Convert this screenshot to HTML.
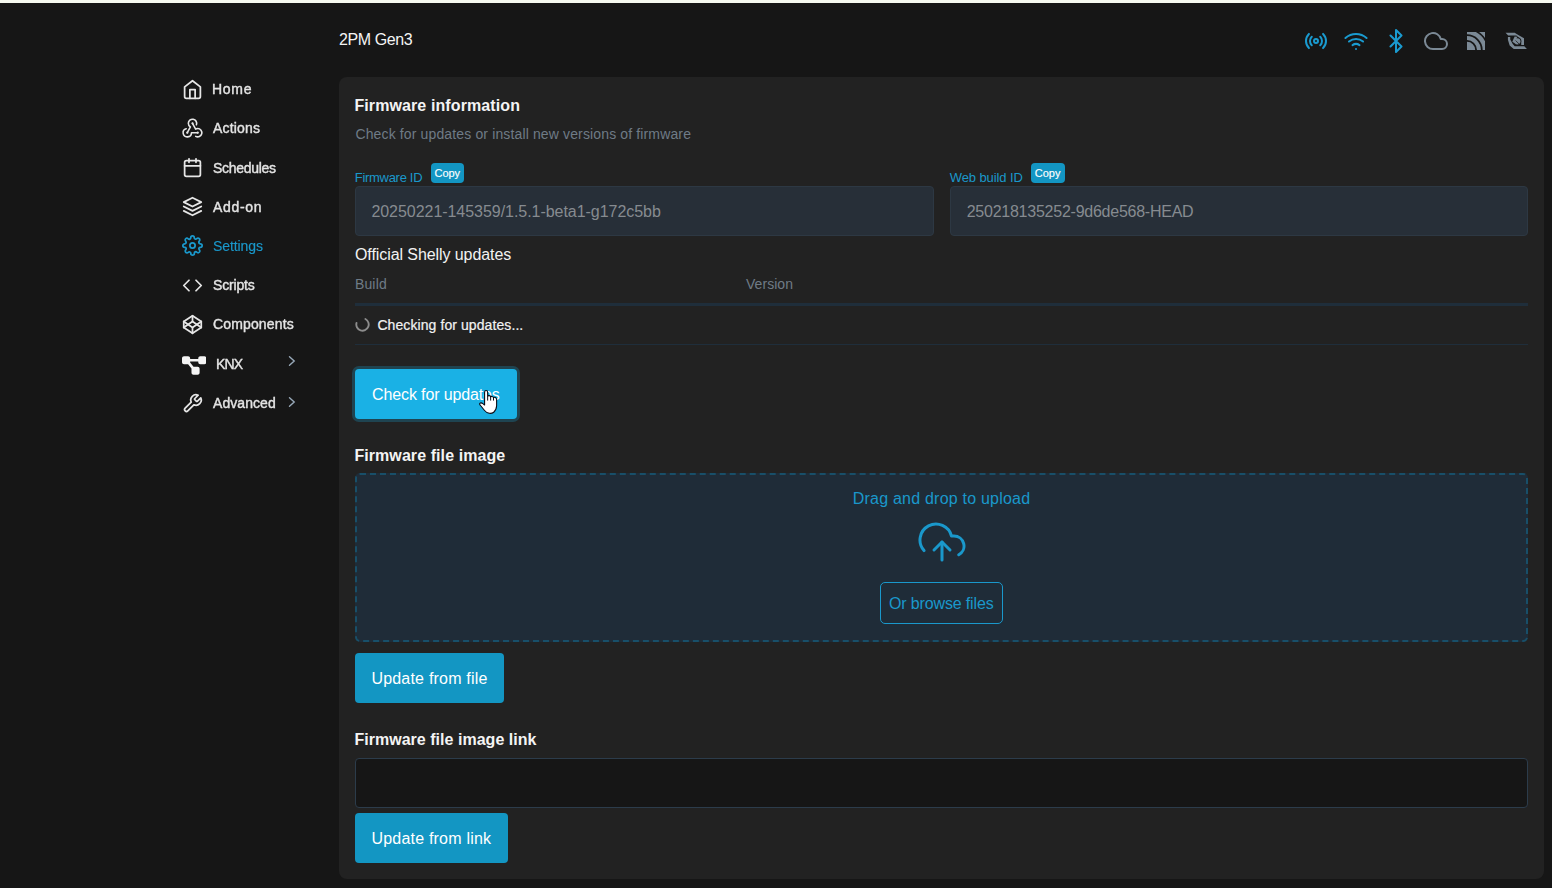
<!DOCTYPE html>
<html lang="en">
<head>
<meta charset="utf-8">
<title>2PM Gen3</title>
<style>
*{box-sizing:border-box;margin:0;padding:0}
html,body{width:1552px;height:888px;overflow:hidden;background:#161616}
body{font-family:"Liberation Sans",sans-serif;color:#e9e9e9;position:relative;font-size:16px}
.abs,.t{position:absolute;white-space:nowrap;line-height:1}
.t{z-index:3}
#topstrip{left:0;top:0;width:1552px;height:3px;background:#f6f9f0}
#card{left:339px;top:77px;width:1205px;height:802px;background:#222222;border-radius:8px}
.ico{position:absolute;width:21px;height:21px;fill:none;stroke:#e6e6e6;stroke-width:2;stroke-linecap:round;stroke-linejoin:round}
.ico.active{stroke:#1a98cb}
.chev{position:absolute;left:285px;width:14px;height:14px;fill:none;stroke:#98a9b9;stroke-width:1.4;stroke-linecap:round;stroke-linejoin:miter}
.field{background:#272f38;border:1px solid #2d3843;border-radius:4px;height:50px}
.btn{background:#1396c3;border-radius:4px}
.st{position:absolute;top:29px;width:24px;height:24px;fill:none;stroke:#1a9bd0;stroke-width:2;stroke-linecap:round;stroke-linejoin:round}
</style>
</head>
<body>
<div id="topstrip" class="abs"></div>

<!-- sidebar icons -->
<svg class="ico" style="left:181.9px;top:79px" viewBox="0 0 24 24"><path d="M3 9l9-7 9 7v11a2 2 0 0 1-2 2H5a2 2 0 0 1-2-2z"/><polyline points="9 22 9 12 15 12 15 22"/></svg>
<svg class="ico" style="left:179.900px;top:115.200px;width:25px;height:25px;stroke-width:1.500" viewBox="0 0 24 24"><path d="M5.965 13.136A4 4 0 1 0 11 17h6"/><path d="M15.066 20.502a4 4 0 1 0 1.934-7.502c-.706 0-1.424.179-2 .5l-3-5.500"/><path d="M15.760 9.370A4 4 0 1 0 8 8c0 1.506.77 2.818 2 3.500l-3 5.500"/><g fill="#e6e6e6" stroke="none"><circle cx="12" cy="8" r="1.050"/><circle cx="7" cy="17" r="1.050"/><circle cx="17" cy="17" r="1.050"/></g></svg>
<svg class="ico" style="left:181.9px;top:157px" viewBox="0 0 24 24"><rect x="3" y="4" width="18" height="18" rx="2" ry="2"/><line x1="16" y1="2" x2="16" y2="6"/><line x1="8" y1="2" x2="8" y2="6"/><line x1="3" y1="10" x2="21" y2="10"/></svg>
<svg class="ico" style="left:181.9px;top:195.900px" viewBox="0 0 24 24"><polygon points="12 2 2 7 12 12 22 7 12 2"/><polyline points="2 17 12 22 22 17"/><polyline points="2 12 12 17 22 12"/></svg>
<svg class="ico active" style="left:182px;top:234.900px" viewBox="0 0 24 24"><circle cx="12" cy="12" r="3"/><path d="M19.400 15a1.650 1.650 0 0 0 .33 1.820l.06.06a2 2 0 0 1 0 2.830 2 2 0 0 1-2.830 0l-.06-.06a1.650 1.650 0 0 0-1.820-.33 1.650 1.650 0 0 0-1 1.510V21a2 2 0 0 1-2 2 2 2 0 0 1-2-2v-.09A1.650 1.650 0 0 0 9 19.400a1.650 1.650 0 0 0-1.820.33l-.06.06a2 2 0 0 1-2.830 0 2 2 0 0 1 0-2.830l.06-.06a1.650 1.650 0 0 0 .33-1.820 1.650 1.650 0 0 0-1.510-1H3a2 2 0 0 1-2-2 2 2 0 0 1 2-2h.09A1.650 1.650 0 0 0 4.600 9a1.650 1.650 0 0 0-.33-1.820l-.06-.06a2 2 0 0 1 0-2.830 2 2 0 0 1 2.830 0l.06.06a1.650 1.650 0 0 0 1.820.33H9a1.650 1.650 0 0 0 1-1.510V3a2 2 0 0 1 2-2 2 2 0 0 1 2 2v.09a1.650 1.650 0 0 0 1 1.510 1.650 1.650 0 0 0 1.820-.33l.06-.06a2 2 0 0 1 2.830 0 2 2 0 0 1 0 2.830l-.06.06a1.650 1.650 0 0 0-.33 1.820V9a1.650 1.650 0 0 0 1.510 1H21a2 2 0 0 1 2 2 2 2 0 0 1-2 2h-.09a1.650 1.650 0 0 0-1.510 1z"/></svg>
<svg class="ico" style="left:182px;top:275px" viewBox="0 0 24 24"><polyline points="16 18 22 12 16 6"/><polyline points="8 6 2 12 8 18"/></svg>
<svg class="ico" style="left:181.9px;top:313.900px" viewBox="0 0 24 24"><polygon points="12 2 22 8.500 22 15.500 12 22 2 15.500 2 8.500 12 2"/><line x1="12" y1="22" x2="12" y2="15.500"/><polyline points="22 8.500 12 15.500 2 8.500"/><polyline points="2 15.500 12 8.500 22 15.500"/><line x1="12" y1="2" x2="12" y2="8.500"/></svg>
<svg class="abs" id="knx" style="left:181.700px;top:354.500px;width:24.400px;height:21px" viewBox="0 0 576 512" preserveAspectRatio="none"><path fill="#f4f4f4" d="M0 80C0 53.500 21.500 32 48 32h96c26.500 0 48 21.500 48 48V96H384V80c0-26.500 21.500-48 48-48h96c26.500 0 48 21.500 48 48v96c0 26.500-21.500 48-48 48H432c-26.500 0-48-21.500-48-48V160H192v16c0 1.700-.1 3.400-.3 5L272 288h96c26.500 0 48 21.500 48 48v96c0 26.500-21.500 48-48 48H272c-26.500 0-48-21.500-48-48V336c0-1.700 .1-3.400 .3-5L144 224H48c-26.500 0-48-21.500-48-48V80z"/></svg>
<svg class="ico" style="left:182.300px;top:393.200px" viewBox="0 0 24 24"><path d="M14.700 6.300a1 1 0 0 0 0 1.400l1.600 1.600a1 1 0 0 0 1.400 0l3.770-3.770a6 6 0 0 1-7.940 7.940l-6.910 6.910a2.120 2.120 0 0 1-3-3l6.910-6.910a6 6 0 0 1 7.940-7.940l-3.760 3.760z"/></svg>
<svg class="chev" style="top:354px" viewBox="0 0 14 14"><polyline points="4.500 2.800 9.200 7.050 4.500 11.300"/></svg>
<svg class="chev" style="top:394.900px" viewBox="0 0 14 14"><polyline points="4.500 2.800 9.200 7.050 4.500 11.300"/></svg>

<!-- card -->
<div id="card" class="abs"></div>
<div class="abs btn" style="left:431px;top:163px;width:33px;height:20px"></div>
<div class="abs field" style="left:355px;top:186px;width:579px"></div>
<div class="abs btn" style="left:1031px;top:163px;width:34px;height:20px"></div>
<div class="abs field" style="left:950px;top:186px;width:578px"></div>

<div class="abs" style="left:355px;top:303px;width:1173px;height:3px;background:#1f2e3b"></div>
<svg class="abs" style="left:354.500px;top:317.300px;width:15px;height:15px" viewBox="0 0 15 15"><path d="M10.410 2.030A6.200 6.200 0 1 1 1.490 6" fill="none" stroke="#8c8c8c" stroke-width="1.900" stroke-linecap="round"/></svg>
<div class="abs" style="left:355px;top:344px;width:1173px;height:1px;background:#1f2e3b"></div>

<div class="abs btn" style="left:355px;top:369px;width:162px;height:50px;background:#1ab1e5;box-shadow:0 0 0 3px #1f4451"></div>
<svg class="abs" id="cursor" style="left:466px;top:380px;width:44px;height:44px;z-index:5" viewBox="0 0 888 888"><path d="M375 250Q375 212 405 212Q437 212 437 250L437 330Q440 312 470 315Q497 318 497 345Q500 328 527 332Q555 336 555 362Q560 345 587 350Q618 356 618 395L618 520Q612 610 560 650Q520 680 470 672Q410 660 370 610L285 505Q262 478 290 465Q312 455 340 478L375 505Z" fill="#fff" stroke="#0a0a14" stroke-width="22" stroke-linejoin="round"/><path d="M437 330V415M497 345V415M555 362V415" stroke="#0a0a14" stroke-width="20" fill="none"/></svg>

<div class="abs" style="left:355px;top:473px;width:1173px;height:169px;background:#1f2c38;border:2px dashed #184f69;border-radius:5px"></div>
<svg class="abs" style="left:918px;top:518px;width:48px;height:48px;fill:none;stroke:#1a98cb;stroke-width:1.500;stroke-linecap:round;stroke-linejoin:round" viewBox="0 0 24 24"><polyline points="16 16 12 12 8 16"/><line x1="12" y1="12" x2="12" y2="21"/><path d="M20.390 18.390A5 5 0 0 0 18 9h-1.260A8 8 0 1 0 3 16.300"/></svg>
<div class="abs" style="left:880px;top:582px;width:123px;height:42px;border:1px solid #1a98cb;border-radius:5px"></div>

<div class="abs btn" style="left:355px;top:653px;width:149px;height:50px"></div>
<div class="abs" style="left:355px;top:758px;width:1173px;height:50px;background:#161616;border:1px solid #2c3c4b;border-radius:4px"></div>
<div class="abs btn" style="left:355px;top:813px;width:153px;height:50px"></div>

<div class="t" id="title" style="left:339.00px;top:32px;font-size:16px;color:#f4f4f4;letter-spacing:-0.414px">2PM Gen3</div>
<div class="t" id="n1" style="left:212.10px;top:82px;font-size:14px;color:#e4e4e4;letter-spacing:0.700px;will-change:transform;-webkit-text-stroke:0.4px #e4e4e4">Home</div>
<div class="t" id="n2" style="left:212.70px;top:121px;font-size:14px;color:#e4e4e4;letter-spacing:0.183px;will-change:transform;-webkit-text-stroke:0.4px #e4e4e4">Actions</div>
<div class="t" id="n3" style="left:212.80px;top:161px;font-size:14px;color:#e4e4e4;letter-spacing:-0.300px;will-change:transform;-webkit-text-stroke:0.4px #e4e4e4">Schedules</div>
<div class="t" id="n4" style="left:212.80px;top:200px;font-size:14px;color:#e4e4e4;letter-spacing:0.680px;will-change:transform;-webkit-text-stroke:0.4px #e4e4e4">Add-on</div>
<div class="t" id="n5" style="left:213.00px;top:239px;font-size:14px;color:#1a98cb;letter-spacing:-0.086px;will-change:transform;-webkit-text-stroke:0.15px #1a98cb">Settings</div>
<div class="t" id="n6" style="left:213.00px;top:278px;font-size:14px;color:#e4e4e4;letter-spacing:-0.183px;will-change:transform;-webkit-text-stroke:0.4px #e4e4e4">Scripts</div>
<div class="t" id="n7" style="left:212.80px;top:317px;font-size:14px;color:#e4e4e4;letter-spacing:0.144px;will-change:transform;-webkit-text-stroke:0.4px #e4e4e4">Components</div>
<div class="t" id="n8" style="left:216.20px;top:357px;font-size:14px;color:#e4e4e4;letter-spacing:-0.900px;will-change:transform;-webkit-text-stroke:0.4px #e4e4e4">KNX</div>
<div class="t" id="n9" style="left:212.50px;top:396px;font-size:14px;color:#e4e4e4;letter-spacing:0.071px;will-change:transform;-webkit-text-stroke:0.4px #e4e4e4">Advanced</div>
<div class="t" id="h1" style="left:354.40px;top:98px;font-size:16px;color:#f4f4f4;letter-spacing:0.105px;font-weight:bold">Firmware information</div>
<div class="t" id="sub" style="left:355.40px;top:127px;font-size:14px;color:#6f7b86;letter-spacing:0.138px">Check for updates or install new versions of firmware</div>
<div class="t" id="l1" style="left:354.80px;top:171px;font-size:13px;color:#1a98cb;letter-spacing:-0.300px">Firmware ID</div>
<div class="t" id="l2" style="left:949.70px;top:171px;font-size:13px;color:#1a98cb;letter-spacing:-0.091px">Web build ID</div>
<div class="t" id="c1" style="left:434.60px;top:168px;font-size:11px;color:#ffffff;letter-spacing:-0.067px;-webkit-text-stroke:0.15px #ffffff">Copy</div>
<div class="t" id="c2" style="left:1034.70px;top:168px;font-size:11px;color:#ffffff;letter-spacing:0.033px;-webkit-text-stroke:0.15px #ffffff">Copy</div>
<div class="t" id="i1" style="left:371.40px;top:204px;font-size:16px;color:#868b90;letter-spacing:-0.043px">20250221-145359/1.5.1-beta1-g172c5bb</div>
<div class="t" id="i2" style="left:966.70px;top:204px;font-size:16px;color:#868b90;letter-spacing:-0.244px">250218135252-9d6de568-HEAD</div>
<div class="t" id="osu" style="left:355.00px;top:247px;font-size:16px;color:#f2f2f2;letter-spacing:-0.082px">Official Shelly updates</div>
<div class="t" id="th1" style="left:354.90px;top:277px;font-size:14px;color:#6f7b86;letter-spacing:0.175px">Build</div>
<div class="t" id="th2" style="left:746.00px;top:277px;font-size:14px;color:#6f7b86;letter-spacing:0.050px">Version</div>
<div class="t" id="chk" style="left:377.40px;top:318px;font-size:14px;color:#f2f2f2;letter-spacing:0.086px;-webkit-text-stroke:0.2px #f2f2f2">Checking for updates...</div>
<div class="t" id="b1" style="left:372.10px;top:387px;font-size:16px;color:#ffffff;letter-spacing:-0.131px">Check for updates</div>
<div class="t" id="h2" style="left:354.40px;top:448px;font-size:16px;color:#f4f4f4;letter-spacing:0.078px;font-weight:bold">Firmware file image</div>
<div class="t" id="dd" style="left:852.80px;top:491px;font-size:16px;color:#1a98cb;letter-spacing:0.214px">Drag and drop to upload</div>
<div class="t" id="br" style="left:889.00px;top:596px;font-size:16px;color:#1a98cb;letter-spacing:-0.143px">Or browse files</div>
<div class="t" id="b2" style="left:371.40px;top:671px;font-size:16px;color:#ffffff;letter-spacing:0.207px">Update from file</div>
<div class="t" id="h3" style="left:354.40px;top:732px;font-size:16px;color:#f4f4f4;letter-spacing:0.030px;font-weight:bold">Firmware file image link</div>
<div class="t" id="b3" style="left:371.40px;top:831px;font-size:16px;color:#ffffff;letter-spacing:0.213px">Update from link</div>

<!-- status icons -->
<svg class="st" style="left:1304px" viewBox="0 0 24 24"><circle cx="12" cy="12" r="2"/><path d="M16.240 7.760a6 6 0 0 1 0 8.490m-8.480-.01a6 6 0 0 1 0-8.490m11.310-2.820a10 10 0 0 1 0 14.140m-14.140 0a10 10 0 0 1 0-14.140"/></svg>
<svg class="st" style="left:1344px" viewBox="0 0 24 24"><path d="M5 12.550a11 11 0 0 1 14.080 0"/><path d="M1.420 9a16 16 0 0 1 21.160 0"/><path d="M8.530 16.110a6 6 0 0 1 6.950 0"/><line x1="12" y1="20" x2="12.010" y2="20"/></svg>
<svg class="st" style="left:1384px" viewBox="0 0 24 24"><polyline points="6.500 6.500 17.500 17.500 12 23 12 1 17.500 6.500 6.500 17.500"/></svg>
<svg class="st" style="left:1424px;stroke:#7b8995" viewBox="0 0 24 24"><path d="M18 10h-1.260A8 8 0 1 0 9 20h9a5 5 0 0 0 0-10z"/></svg>
<svg class="abs" id="mqtt" style="left:1467px;top:32px;width:18px;height:18px" viewBox="0 0 18 18"><defs><clipPath id="sq"><rect x="0" y="0" width="18" height="18"/></clipPath></defs><g clip-path="url(#sq)" fill="none" stroke="#7b8995"><circle cx="0" cy="18" r="4.100" stroke-width="8.200"/><circle cx="0" cy="18" r="11.950" stroke-width="3.900"/><circle cx="0" cy="18" r="17.850" stroke-width="4.300"/><circle cx="0" cy="18" r="25" stroke-width="6.800"/></g></svg>
<svg class="abs" id="zb" style="left:1500px;top:28px;width:32px;height:26px" viewBox="0 0 1093 888"><g fill="#7b8995"><polygon points="190,165 500,165 640,245 820,350 820,580 725,580 725,400 610,300 560,255 280,255"/><polygon points="920,715 470,715 330,600 270,400 270,310 350,310 350,390 430,540 500,620 830,625"/></g><circle cx="585" cy="455" r="140" fill="#161616"/><polygon points="500,290 590,300 500,520 420,470" fill="#7b8995"/><circle cx="590" cy="455" r="108" fill="#7b8995"/><line x1="535" y1="430" x2="655" y2="550" stroke="#161616" stroke-width="26"/></svg>
</body>
</html>
